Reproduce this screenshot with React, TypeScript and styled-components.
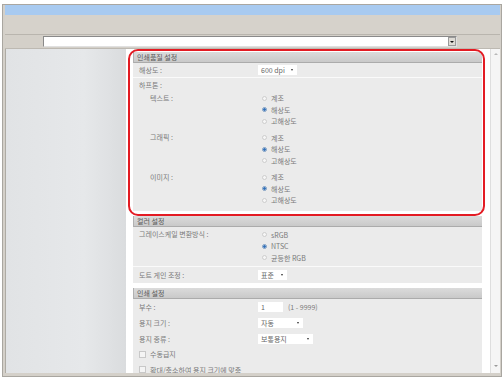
import React from 'react';
import styled, {createGlobalStyle} from 'styled-components';

const GlobalStyle = createGlobalStyle`
  html, body {
    margin: 0;
    padding: 0;
    background: #ffffff;
  }
  body {
    font-family: "Noto Sans CJK KR", "Noto Sans", sans-serif;
    font-size: 7px;
    color: #7a7a7a;
  }
`;

const Window = styled.div`
  position: relative;
  box-sizing: border-box;
  width: 500px;
  height: 373px;
  margin: 4px 0 0 2px;
  border: 1px solid #a9a6a0;
  background: #d4d0c9;
  padding: 0 1px 3px 2px;
  display: flex;
  flex-direction: column;
`;

const TitleBar = styled.div`
  height: 10px;
  background: #a8caf0;
`;

const Toolbar = styled.div`
  height: 19px;
  background: #d6d2cb;
  border-bottom: 1px solid #b9b5ae;
`;

const AddressBar = styled.div`
  height: 14px;
  border-bottom: 1px solid #bdb9b2;
  display: flex;
  align-items: flex-start;
  padding: 1px 0 0 38px;
  box-sizing: border-box;
`;

const AddressField = styled.div`
  width: 414px;
  height: 11px;
  box-sizing: border-box;
  background: #ffffff;
  border: 1px solid #8a8a8a;
  border-right-color: #e0e0e0;
  border-bottom-color: #e0e0e0;
  display: flex;
  justify-content: flex-end;
`;

const DropButton = styled.div`
  width: 8px;
  height: 9px;
  box-sizing: border-box;
  background: #dedbd5;
  border: 1px solid #9a9a9a;
  display: flex;
  align-items: center;
  justify-content: center;
  &::after {
    content: '';
    border-left: 2px solid transparent;
    border-right: 2px solid transparent;
    border-top: 2px solid #111;
  }
`;

const Main = styled.div`
  flex: 1;
  display: flex;
  min-height: 0;
`;

const SidePanel = styled.div`
  width: 121px;
  box-sizing: border-box;
  border-left: 1px solid #aeaba4;
  background: linear-gradient(to right, #e1e3e5 0%, #e6e8ea 65%, #dadcde 100%);
`;

const Content = styled.div`
  flex: 1;
  background: #ffffff;
  padding: 3px 8px 0 7px;
  overflow: hidden;
`;

const Scrollbar = styled.div`
  width: 10px;
  box-sizing: border-box;
  background: #f5f5f5;
  border-left: 1px solid #dedede;
  display: flex;
  flex-direction: column;
  justify-content: space-between;
  align-items: center;
  padding: 4px 0 6px;
`;

const Arrow = styled.div<{$down?: boolean}>`
  width: 0;
  height: 0;
  border-left: 2px solid transparent;
  border-right: 2px solid transparent;
  ${p => p.$down ? 'border-top: 2px solid #9a9a9a;' : 'border-bottom: 2px solid #b8b8b8;'}
`;

const Section = styled.div`
  background: #ebebeb;
  margin-bottom: 5px;
`;

const SectionHeader = styled.div`
  height: 10px;
  line-height: 10px;
  padding-left: 3px;
  background: linear-gradient(#dbdbdb, #c9c9c9);
  border-left: 1px solid #b1b1b1;
  border-bottom: 1px solid #ababab;
  color: #5a5a5a;
`;

const Row = styled.div<{$h: number; $sep?: boolean}>`
  display: grid;
  grid-template-columns: 119px 1fr;
  align-items: center;
  height: ${p => p.$h}px;
  padding-left: 6px;
  border-bottom: ${p => p.$sep ? '1px solid #fafafa' : 'none'};
`;

const GroupRow = styled.div<{$indent?: boolean; $sep?: boolean; $top?: number; $bottom?: number}>`
  display: grid;
  grid-template-columns: ${p => p.$indent ? '108px' : '119px'} 1fr;
  align-items: start;
  padding: ${p => p.$top ?? 0}px 0 ${p => p.$bottom ?? 0}px ${p => p.$indent ? '17px' : '6px'};
  border-bottom: ${p => p.$sep ? '1px solid #fafafa' : 'none'};
`;

const GroupLabel = styled.div`
  height: 11.5px;
  line-height: 11.5px;
`;

const PlainLabel = styled.div<{$h: number}>`
  height: ${p => p.$h}px;
  line-height: ${p => p.$h}px;
  padding-left: 6px;
`;

const RadioList = styled.div<{$gap: number}>`
  display: flex;
  flex-direction: column;
  margin-bottom: ${p => p.$gap}px;
`;

const RadioItem = styled.div`
  display: flex;
  align-items: center;
  height: 11.5px;
  padding-left: 4px;
  gap: 4px;
`;

const Dot = styled.span<{$on?: boolean}>`
  width: 5px;
  height: 5px;
  box-sizing: border-box;
  border-radius: 50%;
  border: 1px solid ${p => p.$on ? '#7c9cc2' : '#cdcdcd'};
  background: ${p => p.$on ? 'radial-gradient(circle, #2f6fb8 0 45%, #9fbde0 60%)' : '#f6f6f6'};
`;

const Select = styled.div<{$w: number}>`
  width: ${p => p.$w}px;
  height: 10px;
  box-sizing: border-box;
  background: #ffffff;
  display: flex;
  align-items: center;
  justify-content: space-between;
  padding: 0 4px 0 3px;
  color: #666;
  &::after {
    content: '';
    border-left: 1.5px solid transparent;
    border-right: 1.5px solid transparent;
    border-top: 2px solid #333;
  }
`;

const Field = styled.div`
  display: flex;
  align-items: center;
  gap: 5px;
`;

const NumberBox = styled.div`
  width: 25px;
  height: 10px;
  box-sizing: border-box;
  background: #ffffff;
  padding-left: 3px;
  line-height: 10px;
  color: #666;
`;

const CheckRow = styled.div`
  display: flex;
  align-items: center;
  gap: 4px;
  height: 15.5px;
  padding-left: 6px;
`;

const Box = styled.span`
  width: 5px;
  height: 5px;
  border: 1px solid #c8c8c8;
  background: #f4f4f4;
`;

const Highlight = styled.div`
  position: absolute;
  left: 125px;
  top: 44px;
  width: 357px;
  height: 167px;
  box-sizing: border-box;
  border: 2px solid #e31b23;
  border-radius: 10px;
  pointer-events: none;
`;

const Radios = ({items, checked, gap = 0}: {items: string[]; checked: number; gap?: number}) => (
  <RadioList $gap={gap}>
    {items.map((t, i) => (
      <RadioItem key={t}>
        <Dot $on={i === checked} />
        <span>{t}</span>
      </RadioItem>
    ))}
  </RadioList>
);

const halftone = ['계조', '해상도', '고해상도'];

const App = () => {
  return (
    <>
      <GlobalStyle />
      <Window>
        <TitleBar />
        <Toolbar />
        <AddressBar>
          <AddressField>
            <DropButton />
          </AddressField>
        </AddressBar>
        <Main>
          <SidePanel />
          <Content>
            <Section>
              <SectionHeader>인쇄품질 설정</SectionHeader>
              <Row $h={14} $sep>
                <span>해상도 :</span>
                <Select $w={39}>600 dpi</Select>
              </Row>
              <PlainLabel $h={14.5}>하프톤 :</PlainLabel>
              <GroupRow $indent>
                <GroupLabel>텍스트 :</GroupLabel>
                <Radios items={halftone} checked={1} gap={5} />
              </GroupRow>
              <GroupRow $indent>
                <GroupLabel>그래픽 :</GroupLabel>
                <Radios items={halftone} checked={1} gap={5} />
              </GroupRow>
              <GroupRow $indent>
                <GroupLabel>이미지 :</GroupLabel>
                <Radios items={halftone} checked={1} gap={4.5} />
              </GroupRow>
            </Section>

            <Section>
              <SectionHeader>컬러 설정</SectionHeader>
              <GroupRow $sep $top={2.5} $bottom={2}>
                <GroupLabel>그레이스케일 변환방식 :</GroupLabel>
                <Radios items={['sRGB', 'NTSC', '균등한 RGB']} checked={1} />
              </GroupRow>
              <Row $h={16}>
                <span>도트 게인 조정 :</span>
                <Select $w={29}>표준</Select>
              </Row>
            </Section>

            <Section>
              <SectionHeader>인쇄 설정</SectionHeader>
              <Row $h={17}>
                <span>부수 :</span>
                <Field>
                  <NumberBox>1</NumberBox>
                  <span>(1 - 9999)</span>
                </Field>
              </Row>
              <Row $h={15.5}>
                <span>용지 크기 :</span>
                <Select $w={45}>자동</Select>
              </Row>
              <Row $h={15.5}>
                <span>용지 종류 :</span>
                <Select $w={55}>보통용지</Select>
              </Row>
              <CheckRow>
                <Box />
                <span>수동급지</span>
              </CheckRow>
              <CheckRow>
                <Box />
                <span>확대/축소하여 용지 크기에 맞춤</span>
              </CheckRow>
            </Section>
          </Content>
          <Scrollbar>
            <Arrow />
            <Arrow $down />
          </Scrollbar>
        </Main>
        <Highlight />
      </Window>
    </>
  );
};

export default App;
